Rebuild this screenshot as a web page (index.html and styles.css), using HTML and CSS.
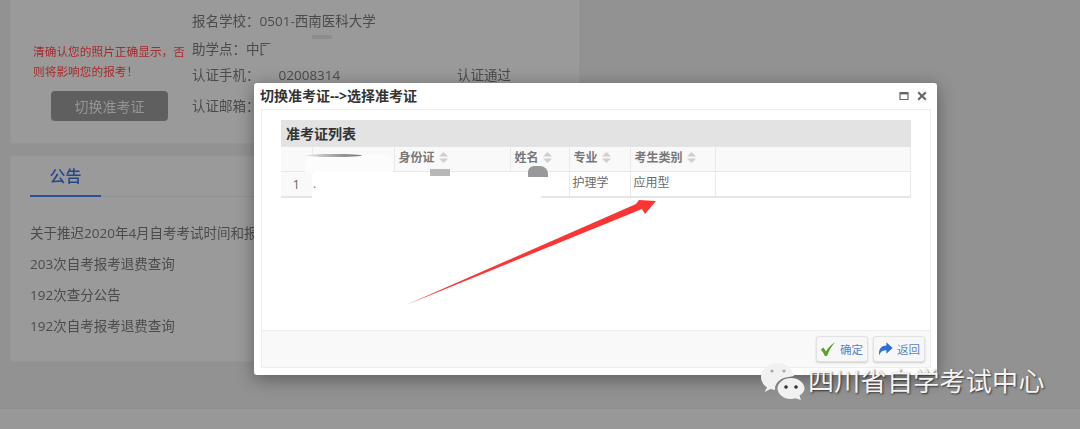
FILE: index.html
```html
<!DOCTYPE html>
<html lang="zh-CN">
<head>
<meta charset="utf-8">
<title>切换准考证</title>
<link rel="stylesheet" href="styles.css">
</head>
<body>
<div class="page">
  <main class="main">
    <section class="card info-card">
      <div class="photo-col">
        <p class="warn">清确认您的照片正确显示，否则将影响您的报考！</p>
        <button class="switch-btn" type="button">切换准考证</button>
      </div>
      <div class="info-col">
        <div class="info-row">报名学校：0501-西南医科大学</div>
        <div class="info-row info-row-second">助学点：中国</div>
        <div class="info-row"><span class="info-label">认证手机：<span class="phone">02008314</span></span><span>认证通过</span></div>
        <div class="info-row info-row-last">认证邮箱：</div>
      </div>
    </section>
    <section class="card notice-card">
      <div class="tabs"><span class="tab">公告</span></div>
      <ul class="news">
        <li>关于推迟2020年4月自考考试时间和报</li>
        <li>203次自考报考退费查询</li>
        <li>192次查分公告</li>
        <li>192次自考报考退费查询</li>
      </ul>
    </section>
  </main>
  <footer class="footer"></footer>
</div>

<div class="erase erase-info"></div>
<div class="erase-chip chip-info"></div>

<div class="modal">
  <div class="modal-title">
    <span>切换准考证--&gt;选择准考证</span>
    <span class="modal-tools">
      <svg width="10" height="10" viewBox="0 0 10 10"><path d="M1 1.500h8v7H1z" fill="none" stroke="#666" stroke-width="1.2"/><path d="M1 1h8v2.400H1z" fill="#666"/></svg>
      <svg width="10" height="10" viewBox="0 0 10 10"><path d="M1.200 1.200l7.600 7.600M8.800 1.200L1.200 8.800" stroke="#666" stroke-width="2.100"/></svg>
    </span>
  </div>
  <div class="panel">
    <div class="panel-body">
      <div class="grid-title">准考证列表</div>
      <table class="grid">
        <colgroup>
          <col class="c-num"><col class="c-no"><col class="c-id"><col class="c-name"><col class="c-major"><col class="c-type"><col>
        </colgroup>
        <thead>
          <tr>
            <th></th>
            <th></th>
            <th>身份证<svg class="sort" width="9" height="11" viewBox="0 0 9 11"><path d="M4.500 0L9 4.500H0zM4.500 11L0 6.500h9z"/></svg></th>
            <th>姓名<svg class="sort" width="9" height="11" viewBox="0 0 9 11"><path d="M4.500 0L9 4.500H0zM4.500 11L0 6.500h9z"/></svg></th>
            <th>专业<svg class="sort" width="9" height="11" viewBox="0 0 9 11"><path d="M4.500 0L9 4.500H0zM4.500 11L0 6.500h9z"/></svg></th>
            <th>考生类别<svg class="sort" width="9" height="11" viewBox="0 0 9 11"><path d="M4.500 0L9 4.500H0zM4.500 11L0 6.500h9z"/></svg></th>
            <th></th>
          </tr>
        </thead>
        <tbody>
          <tr>
            <td class="num">1</td>
            <td></td>
            <td></td>
            <td></td>
            <td>护理学</td>
            <td>应用型</td>
            <td></td>
          </tr>
        </tbody>
      </table>
    </div>
    <div class="panel-foot">
      <button class="act" type="button">
        <svg width="17" height="16" viewBox="0 0 22 18" preserveAspectRatio="none"><path d="M1 9.500l3.500-2.300 3.200 4.600C10.500 7.500 14.500 3.500 20 1c-5 4.500-8.500 9.500-11 16H6.300C5 14 3.300 11.500 1 9.500z" fill="#5aa02c"/></svg>确定
      </button>
      <button class="act" type="button">
        <svg width="17" height="16" viewBox="0 0 18 18"><path d="M10 1.500l7 6.500-7 6.300v-3.800c-4 0-6.500 1.500-8 5.500C1 10 3.500 5.500 10 5.200z" fill="#2f6fd8"/></svg>返回
      </button>
    </div>
  </div>
</div>

<div class="erase erase-head"></div>
<div class="erase erase-grid"></div>
<div class="erase-chip chip-a"></div>
<div class="erase-chip chip-b"></div>
<div class="erase-chip chip-c"></div>
<span class="dot">.</span>

<svg class="arrow" width="270" height="115" viewBox="0 0 270 115">
  <path d="M1 105L231 4 234 0 251 1 240 14 237 9z" fill="#fb3434"/>
</svg>

<div class="mark">
  <svg class="mark-logo" width="46" height="38" viewBox="0 0 46 38">
    <path d="M18 1C8.500 1 1 7.500 1 15c0 4.500 2.500 8 6 10.500L4.500 30l6-3c1.500.5 3 .8 4.500 1-.8-6 5-12.500 14-13l5-1C33 7 26.500 1 18 1z" fill="#f1f1f1"/>
    <path d="M31 16c-7.500 0-13.500 5-13.500 10.500S23.500 37 31 37c1.500 0 3-.2 4.500-.7L41 38l-1.500-4.500c3-2 5-4.300 5-7C44.500 21 38.500 16 31 16z" fill="#f1f1f1"/>
    <circle cx="12" cy="9" r="1.600" fill="#aaa"/><circle cx="24" cy="9" r="1.600" fill="#aaa"/>
    <circle cx="26" cy="25" r="1.800" fill="#333"/><circle cx="36" cy="25" r="1.800" fill="#333"/>
  </svg>
  <span class="mark-text">四川省自学考试中心</span>
</div>
</body>
</html>
```
FILE: styles.css
```css
* { box-sizing: border-box; }
html, body { margin: 0; height: 429px; overflow: hidden; }
body {
  background: #929292;
  color: #4b4b4b;
  font: 13.5px/1.4 "Open Sans", "Noto Sans CJK SC", sans-serif;
}
.page { height: 429px; display: flex; flex-direction: column; filter: blur(.35px); }
.main { height: 408px; padding-left: 10px; }
.footer { height: 21px; background: #989898; border-top: 1px solid #8e8e8e; }

.card { width: 570px; background: #9a9a9a; border: 1px solid #949494; border-top: 0; border-left-color: #969696; }
.info-card { height: 144px; display: flex; }
.photo-col { width: 181px; padding: 41px 0 0 22px; }
.warn { margin: 0 0 10px; width: 156px; font-size: 11.7px; line-height: 20px; color: #a92a2c; }
.switch-btn {
  display: block; width: 117px; height: 30px; margin-left: 18px; padding: 0;
  border: 0; border-radius: 4px; background: #5f5f5f; color: #959595;
  font: 14px "Open Sans", "Noto Sans CJK SC", sans-serif;
}
.info-col { flex: 1; padding-top: 8px; }
.info-row { height: 27px; line-height: 27px; display: flex; }
.info-row-second { line-height: 28px; }
.info-row-last { margin-top: 4px; }
.info-label { width: 265px; }
.phone { margin-left: 19px; }

.notice-card { height: 207px; margin-top: 11px; border-top: 1px solid #949494; }
.tabs { height: 41px; margin: 0 0 0 19px; padding-top: 8px; border-bottom: 1px solid #929292; }
.tab {
  display: block; width: 71px; height: 33px; text-align: center;
  font-size: 16px; line-height: 24px; font-weight: 500; color: #25468f;
  border-bottom: 2px solid #2c4f96;
}
.news { list-style: none; margin: 0; padding: 21px 0 0 19px; }
.news li { height: 31px; line-height: 31px; white-space: nowrap; }

.modal {
  position: absolute; left: 254px; top: 83px; width: 683px; height: 292px;
  padding: 0 6px 7px 7px; display: flex; flex-direction: column;
  background: #fff; border-radius: 3px;
  box-shadow: 0 4px 18px rgba(0, 0, 0, .38);
}
.modal-title {
  height: 26px; display: flex; align-items: center; justify-content: space-between;
  padding-right: 4px; margin-left: -1px; font-size: 14px; font-weight: 700; color: #333;
}
.modal-tools { display: flex; gap: 8px; }
.panel { flex: 1; display: flex; flex-direction: column; border: 1px solid #eee; }
.panel-body { flex: 1; padding: 10px 19px 0; }
.grid-title {
  height: 27px; line-height: 28px; padding-left: 5px; background: #e3e3e3;
  font-size: 14px; font-weight: 700; color: #333;
}
.grid { width: 100%; table-layout: fixed; border-collapse: collapse; font-size: 12px; color: #6a6a6a; border-bottom: 2px solid #e6e6e6; border-right: 1px solid #e6e6e6; }
.c-num { width: 31px; } .c-no { width: 82px; } .c-id { width: 116px; }
.c-name { width: 59px; } .c-major { width: 61px; } .c-type { width: 85px; }
.grid th {
  height: 24px; padding: 0 0 0 4px; text-align: left; font-weight: 700; color: #777;
  background: #f9f9f9; border-right: 1px solid #e9e9e9; border-bottom: 1px solid #e9e9e9;
}
.grid td { height: 26px; padding: 0 0 0 3px; border-right: 1px solid #e9e9e9; }
.grid td.num { background: #f9f9f9; text-align: center; font-size: 13px; padding: 0; }
.sort { margin-left: 4px; vertical-align: -1px; fill: #cfcfcf; }
.panel-foot {
  height: 37px; display: flex; justify-content: flex-end; align-items: center; gap: 5px;
  padding-right: 5px; background: #f9f9f9; border-top: 1px solid #eee;
}
.act {
  width: 52px; height: 26px; padding: 0 0 0 3px; display: flex; align-items: center; gap: 3px;
  background: #f7f7f7; border: 1px solid #e2e2e2; border-radius: 3px;
  box-shadow: 0 1px 2px rgba(0, 0, 0, .18);
  font: 11.5px "Open Sans", "Noto Sans CJK SC", sans-serif; color: #5b83c7;
}

.erase { position: absolute; }
.erase-info { left: 262px; top: 34px; width: 156px; height: 34px; background: #9a9a9a; border-radius: 50%; }
.erase-head { left: 305px; top: 155px; width: 88px; height: 17px; background: #fcfcfc; border-radius: 8px 8px 0 0; }
.erase-grid { left: 312px; top: 172px; width: 232px; height: 29px; background: #fff; border-radius: 2px 6px 12px 2px; }
.erase-chip { position: absolute; background: #8d8d8d; }
.chip-info { left: 312px; top: 35px; width: 20px; height: 4px; }
.chip-a { left: 306px; top: 154px; width: 56px; height: 3px; border-radius: 50%; background: linear-gradient(90deg, #e6e6e6, #9a9a9a 60%, #777); }
.chip-b { left: 430px; top: 169px; width: 20px; height: 7px; background: #b8b8b8; }
.chip-c { left: 528px; top: 166px; width: 20px; height: 11px; border-radius: 6px 8px 0 0; background: #999; }
.dot { position: absolute; left: 313px; top: 176px; font-size: 12px; color: #777; }

.arrow { position: absolute; left: 405px; top: 200px; }

.mark { position: absolute; left: 760px; top: 362px; display: flex; align-items: center; gap: 2px; }
.mark-text { font-size: 26px; letter-spacing: .3px; line-height: 36px; color: #f4f4f4; text-shadow: 1px 1px 2px rgba(0, 0, 0, .65); }
```
